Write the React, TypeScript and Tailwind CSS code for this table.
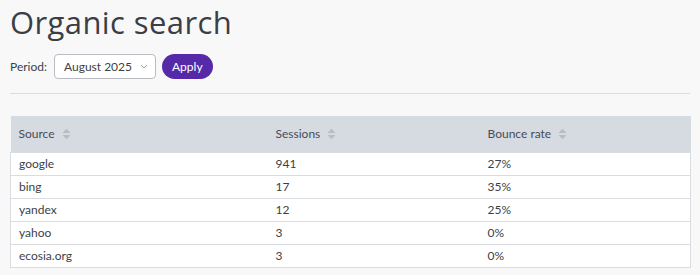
import React from 'react';

const rows = [
  { source: 'google', sessions: 941, bounce: '27%' },
  { source: 'bing', sessions: 17, bounce: '35%' },
  { source: 'yandex', sessions: 12, bounce: '25%' },
  { source: 'yahoo', sessions: 3, bounce: '0%' },
  { source: 'ecosia.org', sessions: 3, bounce: '0%' },
];

const SortIcon = () => (
  <svg width="9" height="12" viewBox="0 0 9 12" className="ml-[7px] inline-block">
    <path d="M4.5 0.5 L8.5 5 H0.5 Z" fill="#b8bec8" />
    <path d="M4.5 11.5 L8.5 7 H0.5 Z" fill="#b8bec8" />
  </svg>
);

export default function App() {
  return (
    <div className="min-h-[275px] w-[700px] bg-[#f8f8f8] px-[10px] font-[family-name:Lato,sans-serif] text-[#3b3f47]">
      <h1 className="pt-[2px] font-[family-name:Open_Sans,sans-serif] text-[31px] leading-[40px] tracking-[0.4px] text-[#3a3e46]">
        Organic search
      </h1>

      {/* Filters */}
      <div className="mt-[12px] flex items-center text-[12px]">
        <span className="text-[#3b3f47]">Period:</span>
        <button className="ml-[7px] flex h-[25px] w-[102px] items-center rounded-[4px] border border-[#b9bcc2] bg-white pl-[9px] text-[12px] text-[#3b3f47]">
          August 2025
          <svg width="8" height="5" viewBox="0 0 8 5" className="ml-[8px]">
            <path d="M1 1 L4 4 L7 1" stroke="#9a9ea6" strokeWidth="1" fill="none" />
          </svg>
        </button>
        <button className="ml-[6px] h-[25px] rounded-full bg-[#5529a8] px-[10px] text-[12px] text-white">
          Apply
        </button>
      </div>

      <div className="mt-[14px] h-px w-full bg-[#dcdde0]" />

      {/* Table */}
      <table className="mt-[22px] w-[681px] border-collapse text-[12px]">
        <thead>
          <tr className="h-[36px] bg-[#d6dbe2] text-left text-[#474c55]">
            <th className="w-[265px] pl-[8px] font-normal">
              <span className="flex items-center">Source<SortIcon /></span>
            </th>
            <th className="w-[212px] font-normal">
              <span className="flex items-center">Sessions<SortIcon /></span>
            </th>
            <th className="font-normal">
              <span className="flex items-center">Bounce rate<SortIcon /></span>
            </th>
          </tr>
        </thead>
        <tbody>
          {rows.map((r) => (
            <tr key={r.source} className="h-[23px] border border-[#d9dce1] bg-white text-[#3b3f47]">
              <td className="pl-[8px]">{r.source}</td>
              <td>{r.sessions}</td>
              <td>{r.bounce}</td>
            </tr>
          ))}
        </tbody>
      </table>
    </div>
  );
}
